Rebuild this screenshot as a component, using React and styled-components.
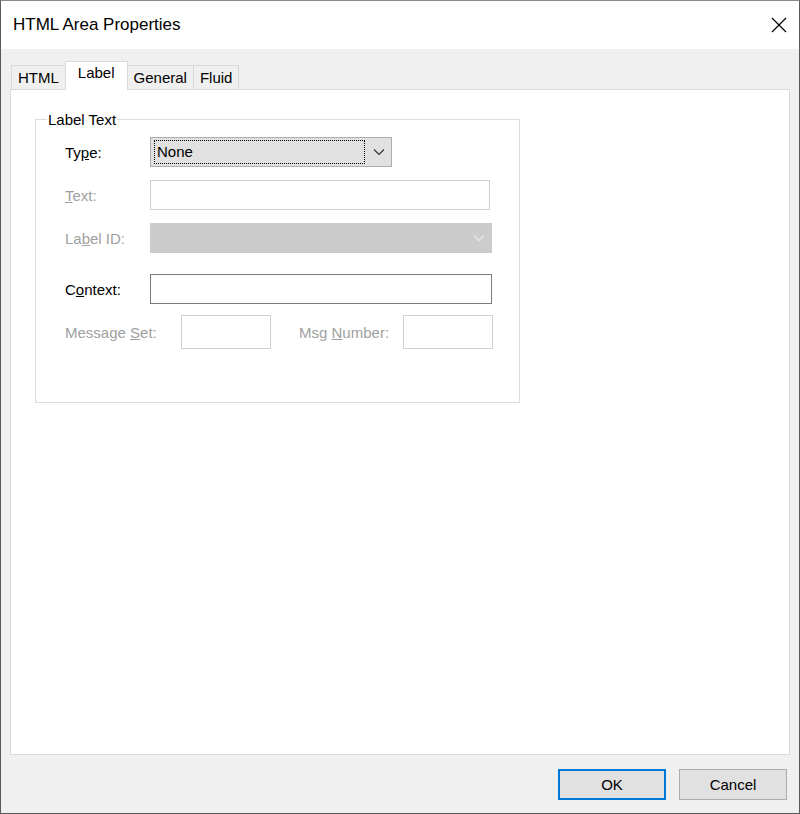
import styled, { createGlobalStyle } from "styled-components";

const Global = createGlobalStyle`
  html, body { margin: 0; padding: 0; background: #fff; }
  body { font-family: "Liberation Sans", Arial, sans-serif; }
`;

const Window = styled.div`
  width: 800px;
  height: 814px;
  box-sizing: border-box;
  border: 1px solid #5a5a5a;
  border-top-color: #8a8a8a;
  background: #f0f0f0;
  display: flex;
  flex-direction: column;
`;

const TitleBar = styled.div`
  height: 48px;
  background: #fff;
  display: flex;
  align-items: center;
  justify-content: space-between;
  padding: 0 12px 0 12px;
  font-size: 17px;
  color: #000;
`;

const Body = styled.div`
  flex: 1;
  display: flex;
  flex-direction: column;
  padding: 13px 9px 0 9px;
`;

const Tabs = styled.div`
  display: flex;
  align-items: flex-end;
  height: 27px;
  padding-left: 2px;
`;

const Tab = styled.div`
  height: ${(p) => (p.$active ? "29px" : "24px")};
  box-sizing: border-box;
  padding: 0 6px;
  display: flex;
  align-items: center;
  font-size: 15px;
  border: 1px solid #d9d9d9;
  border-bottom: none;
  margin-left: -1px;
  background: ${(p) => (p.$active ? "#fff" : "#f0f0f0")};
  margin-bottom: ${(p) => (p.$active ? "-1px" : "0")};
  position: relative;
  z-index: ${(p) => (p.$active ? 1 : 0)};
  ${(p) => (p.$active ? "align-items: flex-start; padding: 2px 12px 0 12px;" : "")}
`;

const Panel = styled.div`
  flex: 1;
  background: #fff;
  border: 1px solid #d9d9d9;
  padding: 29px 0 0 24px;
`;

const Group = styled.fieldset`
  width: 485px;
  height: 292px;
  box-sizing: border-box;
  margin: 0;
  border: 1px solid #dcdcdc;
  padding: 8px 0 0 29px;
  position: relative;
  top: -8px;
`;

const Legend = styled.legend`
  font-size: 15px;
  padding: 0 1px;
  margin-left: -18px;
  color: #000;
`;

const Row = styled.div`
  display: flex;
  align-items: center;
  height: 32px;
  margin-bottom: ${(p) => p.$gap || 11}px;
`;

const Label = styled.span`
  width: ${(p) => p.$w || 85}px;
  font-size: 15px;
  color: ${(p) => (p.$disabled ? "#a0a0a0" : "#000")};
  u { text-decoration: underline; }
`;

const Input = styled.div`
  width: ${(p) => p.$w || 340}px;
  height: ${(p) => p.$h || 30}px;
  box-sizing: border-box;
  background: #fff;
  border: 1px solid ${(p) => (p.$active ? "#7a7a7a" : "#d0d0d0")};
`;

const Combo = styled.div`
  width: ${(p) => p.$w}px;
  height: 30px;
  box-sizing: border-box;
  display: flex;
  align-items: center;
  justify-content: space-between;
  background: ${(p) => (p.$disabled ? "#cccccc" : "#e1e1e1")};
  border: 1px solid ${(p) => (p.$disabled ? "#cccccc" : "#adadad")};
  padding: 0 6px 0 3px;
  font-size: 15px;
`;

const Focus = styled.span`
  border: 1px dotted #000;
  flex: 1;
  height: 22px;
  line-height: 22px;
  padding-left: 2px;
  margin-right: 8px;
`;

const Footer = styled.div`
  height: 58px;
  display: flex;
  justify-content: flex-end;
  align-items: center;
  gap: 13px;
  padding-right: 3px;
`;

const Button = styled.div`
  width: 108px;
  height: 31px;
  box-sizing: border-box;
  display: flex;
  align-items: center;
  justify-content: center;
  font-size: 15px;
  background: #e1e1e1;
  border: ${(p) => (p.$default ? "2px solid #0078d7" : "1px solid #adadad")};
`;

const Chevron = ({ color }) => (
  <svg width="12" height="8" viewBox="0 0 12 8">
    <path d="M1 1.5 L6 6.5 L11 1.5" fill="none" stroke={color} strokeWidth="1.2" />
  </svg>
);

export default function App() {
  return (
    <>
      <Global />
      <Window>
        <TitleBar>
          <span>HTML Area Properties</span>
          <svg width="16" height="16" viewBox="0 0 16 16">
            <path d="M1 1 L15 15 M15 1 L1 15" stroke="#000" strokeWidth="1.2" />
          </svg>
        </TitleBar>
        <Body>
          <Tabs>
            <Tab>HTML</Tab>
            <Tab $active>Label</Tab>
            <Tab>General</Tab>
            <Tab>Fluid</Tab>
          </Tabs>
          <Panel>
            <Group>
              <Legend>Label Text</Legend>
              <Row $gap={11}>
                <Label>Ty<u>p</u>e:</Label>
                <Combo $w={242}>
                  <Focus>None</Focus>
                  <Chevron color="#333" />
                </Combo>
              </Row>
              <Row $gap={11}>
                <Label $disabled><u>T</u>ext:</Label>
                <Input />
              </Row>
              <Row $gap={19}>
                <Label $disabled>La<u>b</u>el ID:</Label>
                <Combo $w={342} $disabled>
                  <span />
                  <Chevron color="#e8e8e8" />
                </Combo>
              </Row>
              <Row $gap={11}>
                <Label>C<u>o</u>ntext:</Label>
                <Input $w={342} $active />
              </Row>
              <Row>
                <Label $disabled $w={116}>Message <u>S</u>et:</Label>
                <Input $w={90} $h={34} />
                <Label $disabled $w={104} style={{ marginLeft: 28 }}>Msg <u>N</u>umber:</Label>
                <Input $w={90} $h={34} />
              </Row>
            </Group>
          </Panel>
          <Footer>
            <Button $default>OK</Button>
            <Button>Cancel</Button>
          </Footer>
        </Body>
      </Window>
    </>
  );
}
